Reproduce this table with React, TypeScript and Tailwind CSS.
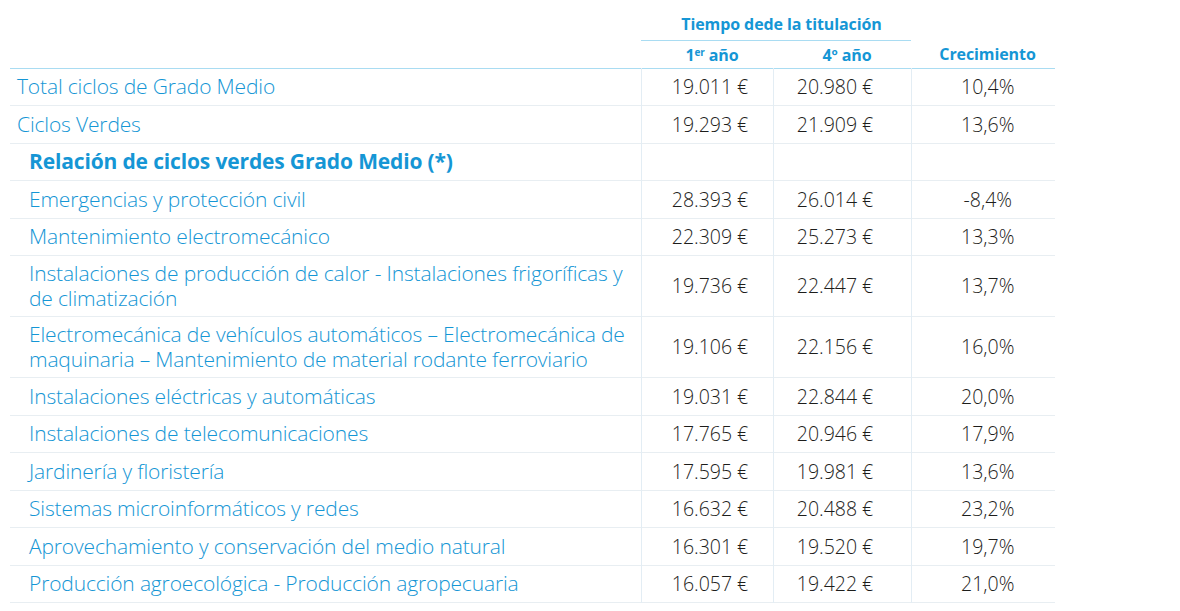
const rows: { label: string[]; a: string; b: string; c: string; indent?: boolean; bold?: boolean }[] = [
  { label: ['Total ciclos de Grado Medio'], a: '19.011 €', b: '20.980 €', c: '10,4%' },
  { label: ['Ciclos Verdes'], a: '19.293 €', b: '21.909 €', c: '13,6%' },
  { label: ['Relación de ciclos verdes Grado Medio (*)'], a: '', b: '', c: '', indent: true, bold: true },
  { label: ['Emergencias y protección civil'], a: '28.393 €', b: '26.014 €', c: '-8,4%', indent: true },
  { label: ['Mantenimiento electromecánico'], a: '22.309 €', b: '25.273 €', c: '13,3%', indent: true },
  {
    label: ['Instalaciones de producción de calor - Instalaciones frigoríficas y', 'de climatización'],
    a: '19.736 €',
    b: '22.447 €',
    c: '13,7%',
    indent: true,
  },
  {
    label: ['Electromecánica de vehículos automáticos – Electromecánica de', 'maquinaria – Mantenimiento de material rodante ferroviario'],
    a: '19.106 €',
    b: '22.156 €',
    c: '16,0%',
    indent: true,
  },
  { label: ['Instalaciones eléctricas y automáticas'], a: '19.031 €', b: '22.844 €', c: '20,0%', indent: true },
  { label: ['Instalaciones de telecomunicaciones'], a: '17.765 €', b: '20.946 €', c: '17,9%', indent: true },
  { label: ['Jardinería y floristería'], a: '17.595 €', b: '19.981 €', c: '13,6%', indent: true },
  { label: ['Sistemas microinformáticos y redes'], a: '16.632 €', b: '20.488 €', c: '23,2%', indent: true },
  { label: ['Aprovechamiento y conservación del medio natural'], a: '16.301 €', b: '19.520 €', c: '19,7%', indent: true },
  { label: ['Producción agroecológica - Producción agropecuaria'], a: '16.057 €', b: '19.422 €', c: '21,0%', indent: true },
]

export default function App() {
  return (
    <div className="min-h-screen bg-white pl-[10px]" style={{ fontFamily: '"Open Sans", Roboto, sans-serif' }}>
      <table className="border-collapse text-[#1596d5]" style={{ width: 1045, tableLayout: 'fixed' }}>
        <colgroup>
          <col style={{ width: 631 }} />
          <col style={{ width: 132 }} />
          <col style={{ width: 138 }} />
          <col style={{ width: 144 }} />
        </colgroup>
        <thead>
          <tr className="h-[40px]">
            <th />
            <th colSpan={2} className="border-b border-[#a9dcf2] pt-[9px] pl-[11px] text-[16px] font-bold tracking-[-0.1px]">
              Tiempo dede la titulación
            </th>
            <th />
          </tr>
          <tr className="h-[28px] border-b border-[#a9dcf2] text-[16px] font-bold tracking-[-0.1px]">
            <th className="pt-[1px]" />
            <th className="pt-[1px] pl-[10px]">
              1<sup className="text-[10px]">er</sup> año
            </th>
            <th className="pt-[1px] pl-[10px]">4º año</th>
            <th className="pt-[1px] pl-[9px]">Crecimiento</th>
          </tr>
        </thead>
        <tbody>
          {rows.map((r, i) => (
            <tr
              key={i}
              className={`border-b border-[#e8eef2] ${r.label.length > 1 ? 'h-[61px]' : 'h-[37.5px]'}`}
            >
              <td
                className={`${r.indent ? 'pl-[19px]' : 'pl-[7px]'} ${r.bold ? 'font-bold' : 'font-light'} text-[21px] leading-[25px] tracking-[-0.15px]`}
              >
                {r.label.map((l, j) => (
                  <div key={j} className="whitespace-nowrap">
                    {l}
                  </div>
                ))}
              </td>
              <td className="border-l border-[#e3edf4] pl-[6px] text-center text-[19.5px] font-light text-[#1d1d1b]">{r.a}</td>
              <td className="border-l border-[#e3edf4] pr-[14px] text-center text-[19.5px] font-light text-[#1d1d1b]">{r.b}</td>
              <td className="border-l border-[#e3edf4] pl-[9px] text-center text-[19.5px] font-light text-[#1d1d1b]">{r.c}</td>
            </tr>
          ))}
        </tbody>
      </table>
    </div>
  )
}
